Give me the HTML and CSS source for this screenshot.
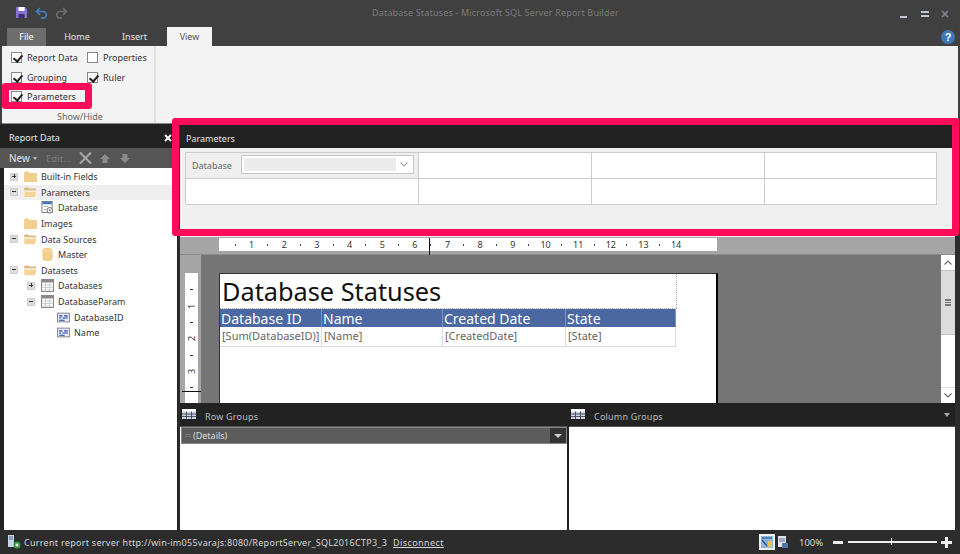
FILE: index.html
```html
<!DOCTYPE html>
<html lang="en">
<head>
<meta charset="utf-8">
<title>Database Statuses - Microsoft SQL Server Report Builder</title>
<link rel="stylesheet" href="styles.css">
</head>
<body>
<svg class="defs" width="0" height="0" aria-hidden="true">
  <symbol id="folder" viewBox="0 0 13 12"><path d="M0 2.500 1 1h3.500l1 1.500H13V11.500H0z" fill="#f0cf8f"/></symbol>
  <symbol id="folder-open" viewBox="0 0 13 12"><path d="M0 2 1 1h3.500l1 1H12v2H0z" fill="#d9bc85"/><path d="M0 11V4h1.500v.8H13L11 11z" fill="#f5d597" stroke="#fff" stroke-width=".5"/></symbol>
  <symbol id="table" viewBox="0 0 13 13"><rect x=".5" y=".5" width="12" height="12" fill="#fff" stroke="#8a8a8a"/><rect x="1" y="1" width="11" height="2.500" fill="#8a8a8a"/><path d="M1 6h11M1 8.500h11M1 11h11M4.500 3.500V12M8.500 3.500V12" stroke="#c4c4c4" stroke-width=".8"/></symbol>
  <symbol id="field" viewBox="0 0 12 9"><rect x=".5" y=".5" width="11" height="8" fill="#e9eef8" stroke="#8a8f9a"/><path d="M2 3h3M6.500 3H10M2 5h2M5 5h5M2 7h5" stroke="#2a3fa5" stroke-width="1"/></symbol>
  <symbol id="param" viewBox="0 0 13 14"><rect x=".5" y=".5" width="11" height="12" fill="#fff" stroke="#777"/><rect x="1" y="1" width="10" height="2.500" fill="#3b78c2"/><path d="M2.500 6h5M2.500 9h3" stroke="#aaa"/><circle cx="9" cy="10" r="3" fill="#fff" stroke="#666"/><circle cx="9" cy="10" r="1" fill="#666"/></symbol>
  <symbol id="db" viewBox="0 0 11 14"><path d="M0 2c0-2.500 11-2.500 11 0v10c0 2.500-11 2.500-11 0z" fill="#f2cd8b"/><path d="M0 2c0 2 11 2 11 0" fill="none" stroke="#fbe7bd"/></symbol>
  <symbol id="grid" viewBox="0 0 14 10"><rect width="14" height="10" fill="#c9d3e4"/><rect width="14" height="2.500" fill="#fff"/><path d="M0 5h14M0 7.500h14M4.500 2.500V10M9.500 2.500V10" stroke="#33373f" stroke-width=".8"/></symbol>
</svg>

<div class="app">
  <header class="titlebar">
    <div class="qat">
      <svg class="qat-save" width="11" height="11" viewBox="0 0 11 11"><path d="M0 0h9l2 2v9H0z" fill="#8a70d6"/><rect x="2.500" y="0" width="6" height="4" fill="#fff"/><rect x="2.500" y="7" width="6" height="4" fill="#3a2f66"/></svg>
      <svg class="qat-undo" width="13" height="12" viewBox="0 0 13 12"><path d="M5 1 1.500 4.500 5 8M2 4.500h6a3.300 3.300 0 0 1 0 6.700H6" fill="none" stroke="#3f7fc4" stroke-width="1.700"/></svg>
      <svg class="qat-redo" width="13" height="12" viewBox="0 0 13 12"><path d="M8 1l3.500 3.500L8 8M11 4.500H5a3.300 3.300 0 0 0 0 6.700h2" fill="none" stroke="#6e6e6e" stroke-width="1.700"/></svg>
    </div>
    <div class="app-title">Database Statuses - Microsoft SQL Server Report Builder</div>
    <div class="winctl">
      <span class="win-min"></span>
      <span class="win-max"></span>
      <svg class="win-close" width="8" height="8" viewBox="0 0 8 8"><path d="M1 1l6 6M7 1 1 7" stroke="#7d8592" stroke-width="1.700"/></svg>
    </div>
  </header>

  <nav class="tabs">
    <div class="tab tab-file">File</div>
    <div class="tab tab-home">Home</div>
    <div class="tab tab-insert">Insert</div>
    <div class="tab tab-view">View</div>
    <div class="help">?</div>
  </nav>

  <section class="ribbon">
    <div class="ribbon-group">
      <div class="checks">
        <label class="check"><span class="box on"></span>Report Data</label>
        <label class="check"><span class="box"></span>Properties</label>
        <label class="check"><span class="box on"></span>Grouping</label>
        <label class="check"><span class="box on"></span>Ruler</label>
        <label class="check"><span class="box on"></span>Parameters</label>
      </div>
      <div class="group-label">Show/Hide</div>
    </div>
  </section>

  <main class="workspace">
    <aside class="report-data">
      <div class="pane-head"><span>Report Data</span><svg width="8" height="8" viewBox="0 0 8 8"><path d="M1 1l6 6M7 1 1 7" stroke="#fff" stroke-width="1.800"/></svg></div>
      <div class="pane-tools">
        <span class="tool-new">New</span><span class="caret"></span>
        <span class="tool-edit">Edit...</span>
        <svg width="13" height="12" viewBox="0 0 13 12"><path d="M1 .5l11 11M12 .5l-11 11" stroke="#a8a8a8" stroke-width="2"/></svg>
        <svg class="arrow" width="10" height="9" viewBox="0 0 10 9"><path d="M5 0l5 5H7.500v4h-5V5H0z" fill="#8a8a8a"/></svg>
        <svg class="arrow arrow-down" width="10" height="9" viewBox="0 0 10 9"><path d="M5 9 0 4h2.500V0h5v4H10z" fill="#8a8a8a"/></svg>
      </div>
      <ul class="tree">
        <li class="row"><span class="exp plus"></span><svg class="ico"><use href="#folder"/></svg>Built-in Fields</li>
        <li class="row sel"><span class="exp"></span><svg class="ico"><use href="#folder-open"/></svg>Parameters</li>
        <li class="row lvl1"><svg class="ico"><use href="#param"/></svg>Database</li>
        <li class="row nox"><svg class="ico"><use href="#folder"/></svg>Images</li>
        <li class="row"><span class="exp"></span><svg class="ico"><use href="#folder-open"/></svg>Data Sources</li>
        <li class="row lvl1"><svg class="ico"><use href="#db"/></svg>Master</li>
        <li class="row"><span class="exp"></span><svg class="ico"><use href="#folder-open"/></svg>Datasets</li>
        <li class="row lvl1x"><span class="exp plus"></span><svg class="ico"><use href="#table"/></svg>Databases</li>
        <li class="row lvl1x"><span class="exp"></span><svg class="ico"><use href="#table"/></svg>DatabaseParam</li>
        <li class="row lvl2"><svg class="ico"><use href="#field"/></svg>DatabaseID</li>
        <li class="row lvl2"><svg class="ico"><use href="#field"/></svg>Name</li>
      </ul>
    </aside>

    <div class="main-col">
      <section class="params">
        <div class="params-head">Parameters</div>
        <div class="params-body">
          <div class="params-grid">
            <div class="pcell pcell-first">
              <span class="plabel">Database</span>
              <span class="pselect"><span class="pselect-fill"></span><svg width="8" height="5" viewBox="0 0 8 5"><path d="M.5.500 4 4 7.500.500" fill="none" stroke="#a9a9a9" stroke-width="1.200"/></svg></span>
            </div>
            <div class="pcell"></div><div class="pcell"></div><div class="pcell"></div>
            <div class="pcell"></div><div class="pcell"></div><div class="pcell"></div><div class="pcell"></div>
          </div>
        </div>
      </section>

      <section class="design">
        <div class="hruler-band">
          <div class="hruler">
            <span class="unit"><i></i><b>1</b></span><span class="unit"><i></i><b>2</b></span><span class="unit"><i></i><b>3</b></span><span class="unit"><i></i><b>4</b></span><span class="unit"><i></i><b>5</b></span><span class="unit"><i></i><b>6</b></span><span class="unit"><i></i><b>7</b></span><span class="unit"><i></i><b>8</b></span><span class="unit"><i></i><b>9</b></span><span class="unit"><i></i><b>10</b></span><span class="unit"><i></i><b>11</b></span><span class="unit"><i></i><b>12</b></span><span class="unit"><i></i><b>13</b></span><span class="unit"><i></i><b>14</b></span>
            <span class="hmark"></span>
          </div>
        </div>
        <div class="canvas-row">
          <div class="vruler-band">
            <div class="vruler">
              <span class="vitem"><i></i></span><span class="vitem"><b>1</b></span><span class="vitem"><i></i></span><span class="vitem"><b>2</b></span><span class="vitem"><i></i></span><span class="vitem"><b>3</b></span><span class="vitem"><i></i></span>
            </div>
            <span class="vmark"></span>
          </div>
          <div class="canvas">
            <div class="page">
              <div class="report-title">Database Statuses</div>
              <div class="rtable">
                <div class="rh">Database ID</div><div class="rh">Name</div><div class="rh">Created Date</div><div class="rh">State</div>
                <div class="rd">[Sum(DatabaseID)]</div><div class="rd">[Name]</div><div class="rd">[CreatedDate]</div><div class="rd">[State]</div>
              </div>
            </div>
          </div>
          <div class="vscroll">
            <span class="sb-btn"><svg width="8" height="5" viewBox="0 0 8 5"><path d="M.5 4.500 4 1l3.500 3.500" fill="none" stroke="#666" stroke-width="1.100"/></svg></span>
            <span class="sb-thumb"><i></i><i></i><i></i></span>
            <span class="sb-track"></span>
            <span class="sb-btn"><svg width="8" height="5" viewBox="0 0 8 5"><path d="M.5.500 4 4l3.500-3.500" fill="none" stroke="#666" stroke-width="1.100"/></svg></span>
          </div>
        </div>
      </section>

      <section class="groups">
        <div class="group-pane group-pane-row">
          <div class="group-head"><svg class="grid-ico"><use href="#grid"/></svg>Row Groups</div>
          <div class="group-list">
            <div class="details"><span class="grip"></span><span class="details-name">(Details)</span><span class="details-drop"></span></div>
          </div>
        </div>
        <div class="group-pane">
          <div class="group-head"><svg class="grid-ico"><use href="#grid"/></svg>Column Groups<span class="head-caret"></span></div>
          <div class="group-list"></div>
        </div>
      </section>
    </div>
  </main>

  <footer class="status">
    <svg class="srv" width="14" height="14" viewBox="0 0 14 14"><rect x="1" y="0" width="6" height="12" fill="#c9d4e4"/><path d="M2 2h4M2 4h4" stroke="#4c6b9c"/><circle cx="10" cy="10" r="3.500" fill="#2f9a3f"/><circle cx="10" cy="10" r="1.500" fill="#dff3df"/></svg>
    <span class="status-text">Current report server http://win-im055varajs:8080/ReportServer_SQL2016CTP3_3</span>
    <a class="disconnect">Disconnect</a>
    <div class="status-right">
      <span class="view-btn active"><svg width="12" height="12" viewBox="0 0 12 12"><rect width="12" height="12" fill="#8fb5dc"/><rect x="7" y="5" width="4" height="6" fill="#f0c04a"/><path d="M1 2h10M1 4l5 6" stroke="#1f4f8f" stroke-width="1.200"/></svg></span>
      <span class="view-btn"><svg width="12" height="13" viewBox="0 0 12 13"><rect x="1" y="0" width="8" height="11" fill="#dfe4ee"/><path d="M2 3h6M2 5h6" stroke="#5a6f96"/><rect x="5" y="7" width="6" height="5" fill="#4d76ad"/></svg></span>
      <span class="zoom-val">100%</span>
      <span class="zoom-minus"></span>
      <span class="slider"><i></i></span>
      <span class="zoom-plus"></span>
    </div>
  </footer>

  <div class="callout callout-check"></div>
  <div class="callout callout-params"></div>
</div>
</body>
</html>
```

FILE: styles.css
```css
* { box-sizing: border-box; margin: 0; padding: 0; }
html, body { width: 960px; height: 554px; overflow: hidden; }
body { font-family: "Noto Sans", "Liberation Sans", sans-serif; font-size: 9px; color: #333; background: #404040; }
.defs { position: absolute; }
.app { position: relative; width: 960px; height: 554px; display: flex; flex-direction: column; background: #404040; }

/* title bar */
.titlebar { height: 27px; display: flex; align-items: flex-start; flex: none; }
.qat { width: 372px; display: flex; padding: 7px 0 0 16px; }
.qat-undo { margin-left: 8px; }
.qat-redo { margin-left: 7px; }
.app-title { width: 246px; padding-top: 6px; font-size: 9px; line-height: 13px; color: #7c7c7c; white-space: nowrap; letter-spacing: .17px; }
.winctl { margin-left: auto; width: 66px; height: 22px; display: flex; align-items: flex-start; padding-left: 6px; }
.win-min { width: 7px; height: 2px; background: #bfc6d2; margin-top: 16px; }
.win-max { width: 8px; height: 6px; margin: 11px 0 0 14px; border-top: 2px solid #bfc6d2; border-bottom: 2px solid #bfc6d2; }
.win-close { margin: 10px 0 0 12px; }

/* tabs */
.tabs { height: 19px; display: flex; flex: none; padding-left: 7px; color: #e4e4e4; font-size: 9px; }
.tab { height: 18px; display: flex; align-items: center; justify-content: center; line-height: 12px; }
.tab-file { width: 39px; height: 18px; margin-top: 1px; background: #6d6d6d; color: #fff; }
.tab-home { width: 62px; margin-top: 1px; }
.tab-insert { width: 53px; margin-top: 1px; }
.tab-view { width: 45px; height: 19px; margin-left: 6px; background: #f3f3f3; color: #555; }
.help { margin: 3px 0 0 auto; margin-right: 5px; width: 14px; height: 14px; border-radius: 50%; background: #3f78b8; color: #fff; font: bold 11px/14px "Liberation Sans", sans-serif; text-align: center; }

/* ribbon */
.ribbon { height: 78px; flex: none; margin: 0 2px; background: #f3f3f3; display: flex; border-bottom: 1px solid #888; }
.ribbon-group { width: 154px; border-right: 2px solid #e2e2e2; display: flex; flex-direction: column; padding: 2px 0 0 9px; }
.checks { display: grid; grid-template-columns: 76px auto; grid-auto-rows: 19.5px; justify-content: start; }
.check { display: flex; align-items: center; gap: 5px; font-size: 9px; color: #333; white-space: nowrap; }
.box { width: 11px; height: 11px; border: 1px solid #888; background: #fff; position: relative; flex: none; }
.box.on::after { content: ""; position: absolute; left: 3px; top: 0; width: 4px; height: 7px; border: solid #222; border-width: 0 2px 2px 0; transform: rotate(40deg); }
.group-label { margin-top: auto; padding: 0 0 0 46px; color: #666; line-height: 13px; }

/* workspace */
.workspace { flex: 1; display: flex; min-height: 0; background: #2c2c2c; padding-right: 5px; }
.report-data { width: 178px; flex: none; display: flex; flex-direction: column; margin-right: 2px; padding-top: 3px; background: #222; }
.pane-head { height: 21px; display: flex; justify-content: space-between; align-items: center; padding: 0 6px 0 9px; color: #e8e8e8; flex: none; }
.pane-tools { height: 20px; background: #555; display: flex; align-items: center; flex: none; padding-left: 9px; color: #e4e4e4; }
.tool-new { font-size: 10px; }
.caret { width: 0; height: 0; border: 2.500px solid transparent; border-top: 3px solid #bbb; border-bottom: 0; margin: 1px 0 0 3px; }
.tool-edit { color: #7a7a7a; margin: 0 8px 0 9px; font-size: 9.5px; letter-spacing: .1px; }
.arrow { margin-left: 8px; }
.arrow-down { margin-left: 10px; }
.tree { flex: 1; background: #fff; list-style: none; margin: 0 1px 0 4px; padding-top: 1px; }
.row { height: 15.6px; display: flex; align-items: center; padding-left: 6px; font-size: 9px; color: #333; white-space: nowrap; }
.row.sel { background: #efefef; }
.row.nox { padding-left: 20px; }
.row.lvl1 { padding-left: 37px; }
.row.lvl1x { padding-left: 23px; }
.row.lvl2 { padding-left: 53px; }
.exp { width: 8px; height: 8px; margin-right: 6px; background: #ddd; border: 1px solid #cfcfcf; position: relative; flex: none; }
.exp::before { content: ""; position: absolute; left: 1px; top: 2px; width: 4px; height: 1px; background: #333; }
.exp.plus::after { content: ""; position: absolute; left: 2.500px; top: .5px; width: 1px; height: 4px; background: #333; }
.ico { width: 13px; height: 13px; margin-right: 4px; flex: none; }

/* right column */
.main-col { flex: 1; display: flex; flex-direction: column; min-width: 0; background: #a5a5a5; }
.params { height: 113px; flex: none; background: #f0f0f0; display: flex; flex-direction: column; }
.params-head { height: 24px; flex: none; background: #222; color: #e4e4e4; padding: 8px 0 0 6px; line-height: 13px; }
.params-body { flex: 1; padding: 4px 0 0 5px; }
.params-grid { width: 752px; height: 52px; display: grid; grid-template-columns: 233px 173px 173px 172px; grid-template-rows: 26px 26px; background: #fff; border-top: 1px solid #ccc; border-left: 1px solid #ccc; }
.pcell { border-right: 1px solid #ccc; border-bottom: 1px solid #ccc; }
.pcell-first { background: #efefef; display: flex; align-items: center; padding-left: 6px; color: #666; }
.plabel { width: 49px; }
.pselect { width: 173px; height: 19px; background: #fff; border: 1px solid #c6c6c6; display: flex; align-items: center; padding: 2px 5px 2px 2px; margin-top: -3px; gap: 4px; }
.pselect-fill { flex: 1; height: 13px; background: #ececec; }

.design { height: 166px; flex: none; display: flex; flex-direction: column; }
.hruler-band { height: 18px; flex: none; padding: 1px 0 0 39px; border-bottom: 1px solid #8c8c8c; }
.hruler { width: 498px; height: 13px; background: #fff; display: flex; position: relative; }
.unit { width: 32.65px; height: 13px; display: flex; align-items: center; justify-content: flex-end; flex: none; }
.unit i { width: 1px; height: 2px; background: #444; margin-right: 11px; }
.unit b { width: 10px; margin-right: -5px; text-align: center; font-weight: 400; font-size: 9px; color: #333; }
.hmark { position: absolute; left: 210px; top: 0; width: 1px; height: 17px; background: #111; }

.canvas-row { flex: 1; display: flex; min-height: 0; }
.vruler-band { width: 21px; flex: none; padding: 18px 0 0 5px; position: relative; }
.vruler { width: 13px; height: 130px; background: #fff; padding-top: 8.5px; }
.vitem { height: 16.35px; display: flex; align-items: center; justify-content: center; }
.vitem b { transform: rotate(-90deg); font-weight: 400; font-size: 9px; line-height: 11px; color: #333; }
.vitem i { width: 3px; height: 1px; background: #333; }
.vmark { position: absolute; left: 2px; top: 136px; width: 19px; height: 1px; background: #111; }
.canvas { flex: 1; background: #757575; padding: 18px 0 0 18px; min-width: 0; overflow: hidden; }
.page { width: 499px; height: 130px; background: #fff; border-top: 1px solid #333; border-left: 1px solid #333; border-right: 2px solid #000; }
.report-title { width: 457px; height: 35px; font: 25.3px/34px "Noto Sans", sans-serif; color: #111; padding-left: 2px; border-right: 1px dotted #aaa; border-bottom: 1px dotted #aaa; white-space: nowrap; }
.rtable { width: 456px; display: grid; grid-template-columns: 102px 121px 123px 110px; }
.rh { height: 18px; background: #4c68a2; color: #fff; font: 14px/19px "Noto Sans", sans-serif; padding-left: 1px; border-right: 1px solid #7d92bd; white-space: nowrap; }
.rd { height: 20px; font: 11px/18px "Noto Sans", sans-serif; color: #666; padding-left: 2px; border-right: 1px solid #ddd; border-bottom: 1px solid #ddd; white-space: nowrap; }
.vscroll { width: 14px; flex: none; background: #fff; display: flex; flex-direction: column; }
.sb-btn { height: 15px; display: flex; align-items: center; justify-content: center; flex: none; background: #fff; }
.sb-thumb { height: 65px; flex: none; background: #dcdcdc; border-top: 1px solid #c4c4c4; border-bottom: 1px solid #c4c4c4; display: flex; flex-direction: column; align-items: center; justify-content: center; gap: 1px; }
.sb-thumb i { width: 6px; height: 1.500px; background: #777; }
.sb-track { flex: 1; border-bottom: 1px solid #ddd; }

.groups { flex: 1; display: flex; gap: 2px; background: #222; min-height: 0; }
.group-pane { flex: 1; display: flex; flex-direction: column; min-width: 0; }
.group-pane-row { flex: none; width: 387px; }
.group-head { height: 23px; flex: none; display: flex; align-items: center; padding: 4px 5px 0 2px; background: #222; color: #bbb; letter-spacing: .2px; }
.grid-ico { width: 14px; height: 10px; margin: -5px 9px 0 0; flex: none; }
.head-caret { margin-left: auto; width: 0; height: 0; border: 3.500px solid transparent; border-top: 4px solid #aaa; border-bottom: 0; margin-top: -3px; }
.group-list { flex: 1; background: #fff; border-top: 1px solid #555; }
.details { height: 17px; background: #5c5c5c; margin: 0 0 0 1px; border: 1px solid #888; display: flex; align-items: center; color: #ddd; }
.grip { width: 6px; height: 3px; margin: 0 2px 0 3px; border-top: 1px solid #777; border-bottom: 1px solid #777; }
.details-drop { margin-left: auto; width: 16px; height: 15px; background: #333; position: relative; }
.details-drop::after { content: ""; position: absolute; left: 4px; top: 6px; border: 4px solid transparent; border-top: 4px solid #ccc; border-bottom: 0; }

/* status */
.status { height: 24px; flex: none; background: #2c2c2c; display: flex; align-items: center; padding: 0 8px 0 7px; color: #d6d6d6; font-size: 9px; }
.srv { margin-right: 3px; }
.status-text { white-space: nowrap; letter-spacing: .28px; }
.disconnect { margin-left: 6px; text-decoration: underline; letter-spacing: .4px; }
.status-right { margin-left: auto; display: flex; align-items: center; }
.view-btn { width: 16px; height: 16px; display: flex; align-items: center; justify-content: center; }
.view-btn.active { background: #f2f2f2; }
.zoom-val { margin: 0 10px 0 8px; font-size: 9.5px; width: 24px; }
.zoom-minus { width: 10px; height: 3px; background: #eee; }
.slider { width: 89px; height: 2px; margin: 0 0 0 5px; background: #eee; position: relative; }
.slider i { position: absolute; left: 43px; top: -3px; width: 1px; height: 7px; background: #eee; }
.zoom-plus { width: 11px; height: 11px; margin-left: 4px; background: linear-gradient(#eee,#eee) center/11px 3px no-repeat, linear-gradient(#eee,#eee) center/3px 11px no-repeat; }

/* highlights */
.callout { position: absolute; border: 7px solid #ff0d5b; border-radius: 3px; }
.callout-check { left: 2px; top: 83px; width: 90px; height: 26px; }
.callout-params { left: 172px; top: 118px; width: 787px; height: 118px; }
```
